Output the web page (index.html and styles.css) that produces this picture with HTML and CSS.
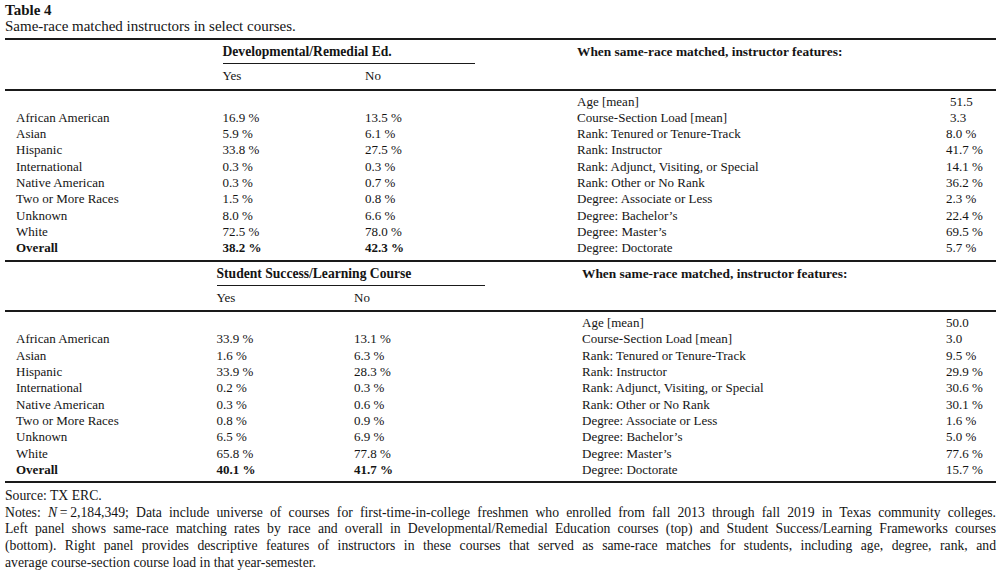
FILE: index.html
```html
<!DOCTYPE html>
<html lang="en">
<head>
<meta charset="utf-8">
<title>Table 4</title>
<link rel="stylesheet" href="styles.css">
</head>
<body>
<div class="page">
  <div class="caption">
    <div class="caption-label">Table 4</div>
    <div class="caption-title">Same-race matched instructors in select courses.</div>
  </div>

  <section class="panel panel-top">
    <div class="head">
      <div class="group">
        <div class="group-title">Developmental/Remedial Ed.</div>
      </div>
      <div class="r-head">When same-race matched, instructor features:</div>
      <div class="yes">Yes</div>
      <div class="no">No</div>
    </div>
    <div class="body">
      <div></div><div></div><div></div><div class="rl">Age [mean]</div><div class="rv plain">51.5</div>
      <div class="ll">African American</div><div>16.9 %</div><div>13.5 %</div><div class="rl">Course-Section Load [mean]</div><div class="rv plain">3.3</div>
      <div class="ll">Asian</div><div>5.9 %</div><div>6.1 %</div><div class="rl">Rank: Tenured or Tenure-Track</div><div class="rv">8.0 %</div>
      <div class="ll">Hispanic</div><div>33.8 %</div><div>27.5 %</div><div class="rl">Rank: Instructor</div><div class="rv">41.7 %</div>
      <div class="ll">International</div><div>0.3 %</div><div>0.3 %</div><div class="rl">Rank: Adjunct, Visiting, or Special</div><div class="rv">14.1 %</div>
      <div class="ll">Native American</div><div>0.3 %</div><div>0.7 %</div><div class="rl">Rank: Other or No Rank</div><div class="rv">36.2 %</div>
      <div class="ll">Two or More Races</div><div>1.5 %</div><div>0.8 %</div><div class="rl">Degree: Associate or Less</div><div class="rv">2.3 %</div>
      <div class="ll">Unknown</div><div>8.0 %</div><div>6.6 %</div><div class="rl">Degree: Bachelor’s</div><div class="rv">22.4 %</div>
      <div class="ll">White</div><div>72.5 %</div><div>78.0 %</div><div class="rl">Degree: Master’s</div><div class="rv">69.5 %</div>
      <div class="ll b">Overall</div><div class="b">38.2 %</div><div class="b">42.3 %</div><div class="rl">Degree: Doctorate</div><div class="rv">5.7 %</div>
    </div>
  </section>

  <section class="panel panel-bottom">
    <div class="head">
      <div class="group">
        <div class="group-title">Student Success/Learning Course</div>
      </div>
      <div class="r-head">When same-race matched, instructor features:</div>
      <div class="yes">Yes</div>
      <div class="no">No</div>
    </div>
    <div class="body">
      <div></div><div></div><div></div><div class="rl">Age [mean]</div><div class="rv">50.0</div>
      <div class="ll">African American</div><div>33.9 %</div><div>13.1 %</div><div class="rl">Course-Section Load [mean]</div><div class="rv">3.0</div>
      <div class="ll">Asian</div><div>1.6 %</div><div>6.3 %</div><div class="rl">Rank: Tenured or Tenure-Track</div><div class="rv">9.5 %</div>
      <div class="ll">Hispanic</div><div>33.9 %</div><div>28.3 %</div><div class="rl">Rank: Instructor</div><div class="rv">29.9 %</div>
      <div class="ll">International</div><div>0.2 %</div><div>0.3 %</div><div class="rl">Rank: Adjunct, Visiting, or Special</div><div class="rv">30.6 %</div>
      <div class="ll">Native American</div><div>0.3 %</div><div>0.6 %</div><div class="rl">Rank: Other or No Rank</div><div class="rv">30.1 %</div>
      <div class="ll">Two or More Races</div><div>0.8 %</div><div>0.9 %</div><div class="rl">Degree: Associate or Less</div><div class="rv">1.6 %</div>
      <div class="ll">Unknown</div><div>6.5 %</div><div>6.9 %</div><div class="rl">Degree: Bachelor’s</div><div class="rv">5.0 %</div>
      <div class="ll">White</div><div>65.8 %</div><div>77.8 %</div><div class="rl">Degree: Master’s</div><div class="rv">77.6 %</div>
      <div class="ll b">Overall</div><div class="b">40.1 %</div><div class="b">41.7 %</div><div class="rl">Degree: Doctorate</div><div class="rv">15.7 %</div>
    </div>
  </section>

  <div class="notes">
    <p>Source: TX ERC.</p>
    <p class="just">
      <span class="line">Notes: <i>N</i>&#8201;=&#8201;2,184,349; Data include universe of courses for first-time-in-college freshmen who enrolled from fall 2013 through fall 2019 in Texas community colleges.</span>
      <span class="line">Left panel shows same-race matching rates by race and overall in Developmental/Remedial Education courses (top) and Student Success/Learning Frameworks courses</span>
      <span class="line">(bottom). Right panel provides descriptive features of instructors in these courses that served as same-race matches for students, including age, degree, rank, and</span>
      <span class="last">average course-section course load in that year-semester.</span>
    </p>
  </div>
</div>
</body>
</html>
```

FILE: styles.css
```css
html, body {
  margin: 0;
  padding: 0;
  background: #ffffff;
}

body {
  font-family: "Liberation Serif", "Times New Roman", serif;
  font-size: 13px;
  line-height: 16.3px;
  color: #141414;
}

.page {
  width: 991px;
  margin-left: 5px;
  padding-top: 2px;
}

.caption {
  font-size: 15px;
  line-height: 16px;
  padding-bottom: 4px;
}

.caption-label {
  font-weight: bold;
}

.panel {
  border-top: 2px solid #1a1a1a;
}

.panel-bottom {
  border-bottom: 2px solid #1a1a1a;
}

.head {
  display: grid;
  padding-top: 4px;
  padding-bottom: 4px;
  border-bottom: 2px solid #1a1a1a;
}

.panel-top .head,
.panel-top .body {
  grid-template-columns: 217.5px 142.5px 212px 369px 50px;
}

.panel-bottom .head,
.panel-bottom .body {
  grid-template-columns: 211.5px 137.5px 228px 364px 50px;
}

.group {
  grid-column: 2 / 4;
  grid-row: 1;
}

.group-title {
  font-weight: bold;
  font-size: 13.6px;
  padding-bottom: 3px;
  border-bottom: 1.5px solid #1a1a1a;
  margin-bottom: 4px;
}

.panel-top .group-title {
  width: 252px;
}

.panel-bottom .group-title {
  width: 268px;
}

.r-head {
  grid-column: 4 / 6;
  grid-row: 1;
  font-weight: bold;
  font-size: 13.4px;
}

.yes {
  grid-column: 2;
  grid-row: 2;
}

.no {
  grid-column: 3;
  grid-row: 2;
}

.body {
  display: grid;
  padding-top: 3px;
  padding-bottom: 3px;
}

.ll {
  padding-left: 11px;
}

.b {
  font-weight: bold;
}

.rv {
  white-space: nowrap;
}

.rv.plain {
  padding-left: 4px;
}

.notes {
  padding-top: 5px;
  font-size: 13.7px;
}

.notes p {
  margin: 0;
  line-height: 16.6px;
}

.notes .line {
  display: block;
  line-height: 16.6px;
  text-align: justify;
  text-align-last: justify;
}

.notes .last {
  display: block;
  line-height: 16.6px;
}
```
